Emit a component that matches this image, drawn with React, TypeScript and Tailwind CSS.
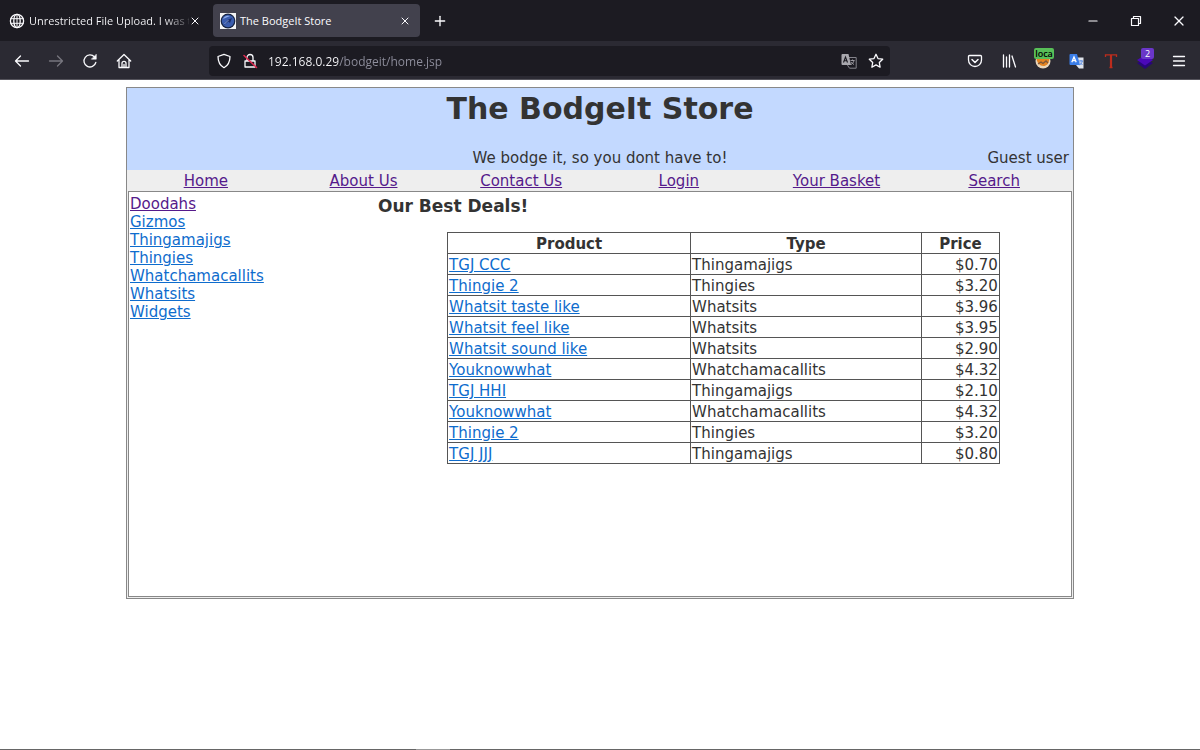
import type { ReactNode } from "react";
import { Minus, Plus, X } from "lucide-react";

const NAV_LINKS = ["Home", "About Us", "Contact Us", "Login", "Your Basket", "Search"];

const CATEGORIES = [
  { name: "Doodahs", visited: true },
  { name: "Gizmos", visited: false },
  { name: "Thingamajigs", visited: false },
  { name: "Thingies", visited: false },
  { name: "Whatchamacallits", visited: false },
  { name: "Whatsits", visited: false },
  { name: "Widgets", visited: false },
];

const DEALS = [
  { product: "TGJ CCC", type: "Thingamajigs", price: "$0.70" },
  { product: "Thingie 2", type: "Thingies", price: "$3.20" },
  { product: "Whatsit taste like", type: "Whatsits", price: "$3.96" },
  { product: "Whatsit feel like", type: "Whatsits", price: "$3.95" },
  { product: "Whatsit sound like", type: "Whatsits", price: "$2.90" },
  { product: "Youknowwhat", type: "Whatchamacallits", price: "$4.32" },
  { product: "TGJ HHI", type: "Thingamajigs", price: "$2.10" },
  { product: "Youknowwhat", type: "Whatchamacallits", price: "$4.32" },
  { product: "Thingie 2", type: "Thingies", price: "$3.20" },
  { product: "TGJ JJJ", type: "Thingamajigs", price: "$0.80" },
];

interface IconProps {
  children: ReactNode;
  className?: string;
}

/** 16px line icon */
function Icon({ children, className = "" }: IconProps) {
  return (
    <svg
      className={`h-4 w-4 shrink-0 ${className}`}
      viewBox="0 0 16 16"
      fill="none"
      stroke="currentColor"
      strokeWidth="1.3"
      strokeLinecap="round"
      strokeLinejoin="round"
    >
      {children}
    </svg>
  );
}

interface ToolButtonProps {
  label: string;
  children: ReactNode;
  disabled?: boolean;
}

function ToolButton({ label, children, disabled }: ToolButtonProps) {
  return (
    <button
      type="button"
      aria-label={label}
      disabled={disabled}
      className="relative flex h-8 w-[34px] shrink-0 items-center justify-center rounded text-[#fbfbfe] disabled:text-[#77767f]"
    >
      {children}
    </button>
  );
}

function TabStrip() {
  return (
    <div className="flex h-[41px] items-center bg-[#1c1b22] text-[11px] text-[#fbfbfe]">
      <div className="flex w-[213px] shrink-0 items-center pl-[9px]">
        <Icon>
          <circle cx="8" cy="8" r="6.6" />
          <ellipse cx="8" cy="8" rx="3.2" ry="6.6" />
          <path d="M1.8 5.7h12.4M1.8 10.3h12.4M8 1.4v13.2" strokeWidth="1" />
        </Icon>
        <span className="ml-1 w-[160px] whitespace-nowrap bg-[linear-gradient(to_right,#fbfbfe_135px,#1c1b22_165px)] bg-clip-text pt-0.5 text-transparent">
          Unrestricted File Upload. I was t
        </span>
        <button type="button" aria-label="Close tab" className="flex h-4 w-3 shrink-0 items-center justify-center">
          <X className="h-3 w-3 shrink-0" strokeWidth={2} />
        </button>
      </div>
      <div className="flex h-[33px] w-[207px] shrink-0 items-center rounded bg-[#42414d] px-[7px]">
        <svg className="h-4 w-4 shrink-0" viewBox="0 0 16 16">
          <rect width="16" height="16" fill="#f4f4f4" />
          <circle cx="8" cy="8" r="7.4" fill="#15223f" />
          <circle cx="8" cy="8" r="6.2" fill="#3a5cad" />
          <path d="M3 6a6 6 0 0 1 7-3C8 4 5 5 3 6z" fill="#8fadea" />
          <path d="M4 12l3.5-5 4.5-2-2 5-1.5-1.5L4 12z" fill="#1b2d69" />
          <path d="M4.5 11l4-4" stroke="#9cb6ee" strokeWidth="0.8" />
        </svg>
        <span className="ml-1 flex-1 whitespace-nowrap pt-0.5">The BodgeIt Store</span>
        <button type="button" aria-label="Close tab" className="flex h-4 w-4 items-center justify-center">
          <X className="h-3 w-3" strokeWidth={2} />
        </button>
      </div>
      <button type="button" aria-label="New tab" className="flex h-8 w-10 items-center justify-center">
        <Plus className="h-4 w-4" strokeWidth={2} />
      </button>
      <div className="ml-auto flex">
        <button type="button" aria-label="Minimize" className="flex h-8 w-[43px] items-center justify-center">
          <Minus className="h-3.5 w-3.5" strokeWidth={2} />
        </button>
        <button type="button" aria-label="Restore" className="flex h-8 w-[43px] items-center justify-center">
          <Icon>
            <path d="M3.5 5.5h7v7h-7zM5.500 5.300V3.500h7v7h-1.800" strokeWidth="1.2" />
          </Icon>
        </button>
        <button type="button" aria-label="Close window" className="flex h-8 w-[43px] items-center justify-center">
          <X className="h-4 w-4" strokeWidth={1.8} />
        </button>
      </div>
    </div>
  );
}

function AddressBar() {
  return (
    <div className="ml-[68px] flex h-[30px] flex-1 items-center rounded bg-[#1c1b22] pl-[7px] text-[#fbfbfe]">
      <Icon>
        <path d="M8 1.300l6 2.200c0 4.800-1.300 8.700-6 11.200-4.700-2.500-6-6.400-6-11.200z" />
      </Icon>
      <Icon className="ml-[10px]">
        <path d="M3 8h10v6H3zM5 8V4.500a3 3 0 0 1 6 0V8" />
        <path d="M2 2.500l12.500 12" stroke="#e22850" strokeWidth="1.5" />
      </Icon>
      <input
        type="text"
        aria-label="Address"
        defaultValue="192.168.0.29/bodgeit/home.jsp"
        className="ml-[10px] min-w-0 flex-1 bg-[linear-gradient(to_right,#fbfbfe_71px,#8f8f9d_71px)] bg-clip-text pt-0.5 text-[12px] text-transparent caret-white outline-none"
      />
      <button type="button" aria-label="Translate page" className="flex w-[26px] justify-center">
        <svg className="h-4 w-4" viewBox="0 0 16 16" fill="none">
          <path d="M6.5 4.500h8.700v10.700H8.500l-2-3z" stroke="#85848c" />
          <path d="M9.5 7.500h4M11.500 6.500v1M13 7.500c-.5 2-1.500 3.200-3 4M10.300 9c.7 1.200 1.500 1.900 2.700 2.500" stroke="#a5a4aa" strokeWidth="0.9" />
          <path d="M1.5 1h6l2.500 11H1.500a1 1 0 0 1-1-1V2a1 1 0 0 1 1-1z" fill="#a9a8ae" />
          <path d="M2.5 9.500l2-5.500 2 5.500M3.200 7.700h2.600" stroke="#1c1b22" strokeWidth="1.1" />
        </svg>
      </button>
      <button type="button" aria-label="Bookmark this page" className="flex w-7 justify-center">
        <Icon>
          <path d="M8 1.300l2 4.300 4.700.6-3.400 3.300.8 4.700L8 11.900l-4.100 2.300.8-4.700L1.300 6.200 6 5.600z" />
        </Icon>
      </button>
    </div>
  );
}

function Toolbar() {
  return (
    <div className="flex h-[39px] items-center border-b border-[#55545c] bg-[#2b2a33] pt-px pl-[5px]">
      <ToolButton label="Back">
        <Icon>
          <path d="M14.5 8h-13M6.500 3l-5 5 5 5" />
        </Icon>
      </ToolButton>
      <ToolButton label="Forward" disabled>
        <Icon>
          <path d="M1.5 8h13M9.500 3l5 5-5 5" />
        </Icon>
      </ToolButton>
      <ToolButton label="Reload">
        <Icon>
          <path d="M13.8 9.500A6 6 0 1 1 12.500 4l1 1" />
          <path d="M14.3 1.500v4.700H9.600z" fill="currentColor" strokeWidth="0.5" />
        </Icon>
      </ToolButton>
      <ToolButton label="Home">
        <Icon>
          <path d="M1.3 8L8 1.500 14.700 8M3 6.500v8h10v-8M6 14.300v-4a2 2 0 0 1 4 0v4M8 11.500v3" />
        </Icon>
      </ToolButton>
      <AddressBar />
      <div className="mr-1 ml-[68px] flex shrink-0">
        <ToolButton label="Save to Pocket">
          <Icon>
            <path d="M2.5 2.500h11a1 1 0 0 1 1 1V7a6.500 6.500 0 0 1-13 0V3.500a1 1 0 0 1 1-1z" />
            <path d="M5 6.500l3 3 3-3" strokeWidth="1.5" />
          </Icon>
        </ToolButton>
        <ToolButton label="Library">
          <Icon>
            <path d="M2.5 2v12M5.500 4v10M8.500 2v12M11 3l3.500 11" />
          </Icon>
        </ToolButton>
        <ToolButton label="Local proxy">
          <svg className="h-4 w-4" viewBox="0 0 16 16">
            <circle cx="8" cy="8" r="7.5" fill="#e9d6bb" />
            <path d="M1.5 6h13c-1 5-3 7-6 7-4 0-6-3-7-7z" fill="#e58422" />
            <path d="M3 11l3-2 2 1.500L11 8l2 2" fill="none" stroke="#7b573a" strokeWidth="1.3" />
          </svg>
          <span className="absolute left-2 top-[3px] flex h-[11px] w-5 items-center justify-center rounded-xs bg-[#58bf58] text-[9px] leading-[11px] font-semibold text-black">
            loca
          </span>
        </ToolButton>
        <ToolButton label="Translate">
          <svg className="h-4 w-4" viewBox="0 0 16 16" fill="none">
            <path d="M7 4.500h7.500v11H10L7 12z" fill="#dfe4ec" />
            <path d="M10 8h4M12 7v1M13.300 8c-.5 2-1.200 3-2.500 4M11 9.500l2.500 2.500" stroke="#5b8be0" />
            <path d="M1.5 1H8l3 11H1.500a1 1 0 0 1-1-1V2a1 1 0 0 1 1-1z" fill="#3a7de8" />
            <path d="M2.8 9.300L5 4l2.200 5.300M3.500 7.600h3" stroke="#fff" strokeWidth="1.3" />
          </svg>
        </ToolButton>
        <ToolButton label="Extension T">
          <svg className="h-4 w-4" viewBox="0 0 16 16" fill="none">
            <path d="M2.5 4V1.800h11V4M6.500 14.500h3" stroke="#bd2c1d" strokeWidth="1.3" />
            <path d="M8 2v12.500" stroke="#bd2c1d" strokeWidth="2.2" />
          </svg>
        </ToolButton>
        <ToolButton label="Wappalyzer">
          <svg className="h-4 w-4" viewBox="0 0 16 16">
            <path d="M0 10l8-4 8 4-8 6z" fill="#28067a" />
            <path d="M0 7l8-5 8 5-8 5.500z" fill="#4b08b8" />
          </svg>
          <span className="absolute left-[13px] top-[3px] h-[11px] w-[13px] rounded-xs bg-[#6a36c8] text-center text-[9px] leading-[11px] text-white">
            2
          </span>
        </ToolButton>
        <ToolButton label="Open application menu">
          <Icon>
            <path d="M2.5 3.500h11M2.500 8h11M2.500 12.500h11" />
          </Icon>
        </ToolButton>
      </div>
    </div>
  );
}

function DealsTable() {
  return (
    <table className="mx-auto w-4/5 table-fixed border-collapse border border-[#555] leading-[18px]">
      <thead>
        <tr>
          <th className="w-[243px] border border-[#555] px-0 pt-0.5 pb-0">Product</th>
          <th className="w-[231px] border border-[#555] px-0 pt-0.5 pb-0">Type</th>
          <th className="border border-[#555] px-0 pt-0.5 pb-0">Price</th>
        </tr>
      </thead>
      <tbody>
        {DEALS.map((deal, index) => (
          <tr key={index}>
            <td className="border border-[#555] px-px pt-0.5 pb-0">
              <a href="#product" className="text-[#0e6ccd] underline">
                {deal.product}
              </a>
            </td>
            <td className="border border-[#555] px-px pt-0.5 pb-0">{deal.type}</td>
            <td className="border border-[#555] px-px pt-0.5 pb-0 text-right">{deal.price}</td>
          </tr>
        ))}
      </tbody>
    </table>
  );
}

function Store() {
  return (
    <div className="mx-auto mt-[7px] w-[79%] border border-[#888] bg-[#eee] font-['DejaVu_Sans',sans-serif] text-[15px] text-[#333]">
      <header className="bg-[#c3d9ff]">
        <h1 className="text-center text-[30px] leading-[42px] font-bold">The BodgeIt Store</h1>
        <div className="grid grid-cols-3 pt-[19px] pb-0.5 leading-[19px]">
          <span />
          <span className="text-center whitespace-nowrap">We bodge it, so you dont have to!</span>
          <span className="pr-1 text-right">Guest user</span>
        </div>
      </header>
      <nav className="grid grid-cols-6 pt-0.5 text-center leading-[19px]">
        {NAV_LINKS.map((link) => (
          <a key={link} href="#nav" className="text-[#551a8b] underline">
            {link}
          </a>
        ))}
      </nav>
      <main className="m-px mt-0 flex min-h-[406px] border border-[#888] bg-white">
        <ul className="w-[249px] shrink-0 pt-[3px] pl-px leading-[18px]">
          {CATEGORIES.map((category) => (
            <li key={category.name}>
              <a href="#category" className={`underline ${category.visited ? "text-[#551a8b]" : "text-[#0e6ccd]"}`}>
                {category.name}
              </a>
            </li>
          ))}
        </ul>
        <section className="flex-1 pr-0.5">
          <h2 className="mb-[14px] pt-0.5 text-[17px] leading-6 font-bold">Our Best Deals!</h2>
          <DealsTable />
        </section>
      </main>
    </div>
  );
}

export default function App() {
  return (
    <div className="flex min-h-screen flex-col bg-white font-['Open_Sans','Noto_Sans',sans-serif]">
      <TabStrip />
      <Toolbar />
      <Store />
      <div className="mt-auto flex h-px bg-[#666]">
        <div className="ml-[416px] w-[34px] bg-[#999]" />
      </div>
    </div>
  );
}
